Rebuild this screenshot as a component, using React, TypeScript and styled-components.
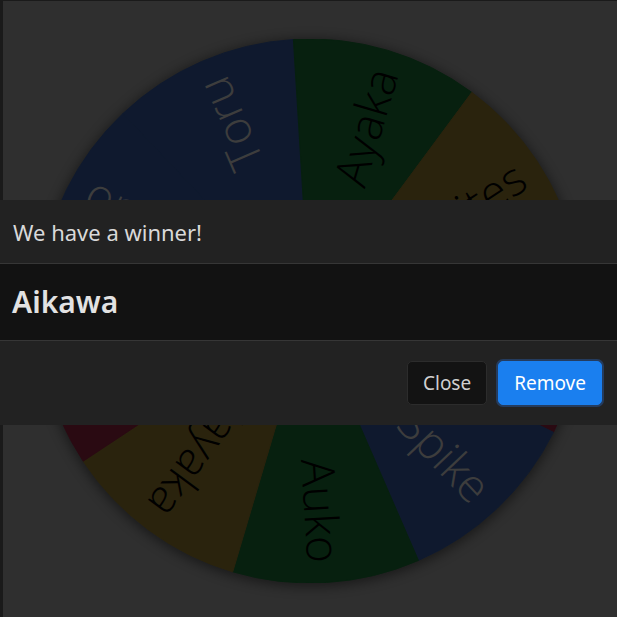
import React from "react";
import styled, { createGlobalStyle } from "styled-components";

const GlobalStyle = createGlobalStyle`
  html, body { margin: 0; padding: 0; }
  body { background: #5e5e5e; font-family: "Noto Sans", "Open Sans", sans-serif; }
`;

const Page = styled.div`
  min-height: 100vh;
  box-sizing: border-box;
  background: #5e5e5e;
  border-left: 3px solid #343434;
  border-top: 1px solid #343434;
  display: flex;
  justify-content: center;
  padding-top: 38px;
`;

const WheelBox = styled.div`
  width: 544px;
  height: 544px;
  border-radius: 50%;
  box-shadow: 0 2px 12px 2px rgba(0, 0, 0, 0.45);
`;

const Backdrop = styled.div`
  position: fixed;
  inset: 0;
  background: rgba(0, 0, 0, 0.5);
`;

const ModalLayer = styled.div`
  position: fixed;
  inset: 0;
  display: flex;
  align-items: center;
  padding-top: 7px;
  box-sizing: border-box;
`;

const Dialog = styled.div`
  width: 100%;
  display: flex;
  flex-direction: column;
  color: #dedede;
`;

const Header = styled.div`
  background: #222222;
  padding: 17px 12px 16px 13px;
  font-size: 22px;
  line-height: 30px;
  border-bottom: 1px solid #363636;
  color: #d9d9d9;
`;

const Body = styled.div`
  background: #121212;
  padding: 19px 12px;
  font-size: 30px;
  font-weight: 600;
  line-height: 38px;
  border-bottom: 1px solid #363636;
  color: #e2e2e2;
`;

const Footer = styled.div`
  background: #222222;
  padding: 20px 15px 20px;
  display: flex;
  justify-content: flex-end;
  gap: 11px;
`;

const Button = styled.button<{ $primary?: boolean }>`
  font-family: "Noto Sans", "Open Sans", sans-serif;
  font-size: 19px;
  line-height: 28px;
  height: 44px;
  padding: 0 15px;
  border-radius: 5px;
  cursor: pointer;
  border: 1px solid ${(p) => (p.$primary ? "#1a7fef" : "#2c2c2c")};
  background: ${(p) => (p.$primary ? "#1a7fef" : "#131313")};
  color: ${(p) => (p.$primary ? "#ffffff" : "#d0d0d0")};
  box-shadow: ${(p) => (p.$primary ? "0 0 0 2px rgba(40, 110, 210, 0.35)" : "none")};
`;

type Seg = { name: string; color: string; text: string };

const COLORS = {
  blue: "#1e335c",
  green: "#0e401e",
  yellow: "#54461a",
  red: "#541424",
};

const segments: Seg[] = [
  { name: "Toru", color: COLORS.blue, text: "#7a7a7a" },
  { name: "Ayaka", color: COLORS.green, text: "#000000" },
  { name: "Kaites", color: COLORS.yellow, text: "#000000" },
  { name: "Aikawa", color: COLORS.red, text: "#7a7a7a" },
  { name: "Spike", color: COLORS.blue, text: "#7a7a7a" },
  { name: "Auko", color: COLORS.green, text: "#000000" },
  { name: "Sayaka", color: COLORS.yellow, text: "#000000" },
  { name: "Hinata", color: COLORS.red, text: "#7a7a7a" },
  { name: "Kazuo", color: COLORS.blue, text: "#7a7a7a" },
];

const C = 272;
const R = 272;
const START = -43.5;
const STEP = 360 / segments.length;

const pt = (deg: number, r: number) => {
  const a = (deg * Math.PI) / 180;
  return [C + r * Math.sin(a), C - r * Math.cos(a)];
};

const WheelLabel = styled.text`
  font-family: "Open Sans", "Lato", sans-serif;
  font-weight: 300;
  font-size: 46px;
`;

const Wheel: React.FC = () => (
  <svg width={544} height={544} viewBox="0 0 544 544">
    {segments.map((s, i) => {
      const a0 = START + STEP * i;
      const a1 = a0 + STEP;
      const [x0, y0] = pt(a0, R);
      const [x1, y1] = pt(a1, R);
      return (
        <path
          key={s.name}
          d={`M ${C} ${C} L ${x0} ${y0} A ${R} ${R} 0 0 1 ${x1} ${y1} Z`}
          fill={s.color}
          stroke={s.color}
          strokeWidth={1}
        />
      );
    })}
    {segments.map((s, i) => {
      const mid = START + STEP * i + STEP / 2;
      return (
        <WheelLabel
          key={s.name}
          x={C + 252}
          y={C}
          textAnchor="end"
          dominantBaseline="central"
          fill={s.text}
          transform={`rotate(${mid - 90} ${C} ${C})`}
        >
          {s.name}
        </WheelLabel>
      );
    })}
  </svg>
);

export default function App() {
  return (
    <>
      <GlobalStyle />
      <Page>
        <WheelBox>
          <Wheel />
        </WheelBox>
      </Page>
      <Backdrop />
      <ModalLayer>
        <Dialog>
          <Header>We have a winner!</Header>
          <Body>Aikawa</Body>
          <Footer>
            <Button>Close</Button>
            <Button $primary>Remove</Button>
          </Footer>
        </Dialog>
      </ModalLayer>
    </>
  );
}
